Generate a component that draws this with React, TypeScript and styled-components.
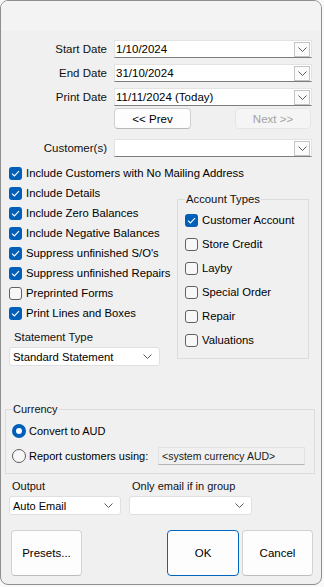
import React from "react";
import styled, { createGlobalStyle, css } from "styled-components";

const GlobalStyle = createGlobalStyle`
  html, body {
    margin: 0;
    padding: 0;
    background: #f9f9f9;
  }
  body {
    font-family: "Liberation Sans", Arial, sans-serif;
    font-size: 11px;
    color: #000;
  }
  * {
    box-sizing: border-box;
  }
`;

const Window = styled.div`
  width: 322px;
  height: 585px;
  border: 1px solid #8f8f8f;
  border-radius: 8px;
  background: #f0f0f0;
  overflow: hidden;
  display: flex;
  flex-direction: column;
`;

const TitleBar = styled.div`
  height: 30px;
  flex: none;
  background: #f3f3f3;
`;

const DateGrid = styled.div`
  display: grid;
  grid-template-columns: 106px 198px;
  column-gap: 7px;
  row-gap: 6px;
  margin-top: 9px;
  align-items: center;
`;

const FieldLabel = styled.div`
  text-align: right;
  color: #111;
  line-height: 18px;
  font-size: 11.5px;
`;

const Field = styled.div`
  height: 18px;
  background: #fff;
  border: 1px solid #e3e3e3;
  border-bottom: 1px solid #7c7c7c;
  display: flex;
  align-items: center;
  padding-left: 1px;
  line-height: 16px;
  white-space: nowrap;
  font-size: 11.5px;
`;

const FieldText = styled.span`
  flex: 1;
`;

const DropButton = styled.span`
  width: 16px;
  height: 15px;
  margin-right: 1px;
  border: 1px solid #c4c4c4;
  background: #fbfbfb;
  display: flex;
  align-items: center;
  justify-content: center;
`;

const NavRow = styled.div`
  grid-column: 2;
  display: flex;
  justify-content: space-between;
  margin-top: -4px;
  padding-right: 1px;
`;

const NavButton = styled.div<{ $disabled?: boolean }>`
  width: 77px;
  height: 21px;
  border: 1px solid #d0d0d0;
  border-bottom-color: #b8b8b8;
  border-radius: 4px;
  background: #fdfdfd;
  display: flex;
  align-items: center;
  justify-content: center;
  font-size: 11.5px;
  ${({ $disabled }) =>
    $disabled &&
    css`
      width: 76px;
      background: #f5f5f5;
      border-color: #e5e5e5;
      color: #a3a3a3;
    `}
`;

const CustomerGrid = styled(DateGrid)`
  margin-top: 10px;
`;

const Checks = styled.div`
  display: flex;
  flex-direction: column;
  padding-left: 8px;
  margin-top: 6px;
  font-size: 11.3px;
`;

const CheckRow = styled.div<{ $tall?: boolean }>`
  display: flex;
  align-items: center;
  height: ${({ $tall }) => ($tall ? "24px" : "20px")};
  gap: 4px;
  white-space: nowrap;
`;

const Box = styled.span<{ $checked?: boolean }>`
  width: 13px;
  height: 13px;
  flex: none;
  border-radius: 3px;
  display: flex;
  align-items: center;
  justify-content: center;
  ${({ $checked }) =>
    $checked
      ? css`
          background: #005fb8;
        `
      : css`
          background: #f7f7f7;
          border: 1px solid #616161;
        `}
`;

const MidRow = styled.div`
  display: flex;
  gap: 8px;
`;

const LeftCol = styled.div`
  width: 160px;
  display: flex;
  flex-direction: column;
`;

const SmallLabel = styled.div`
  line-height: 14px;
  padding-left: 3px;
  color: #111;
`;

const StatementLabel = styled(SmallLabel)`
  margin-top: 7px;
  padding-left: 5px;
`;

const Select = styled.div<{ $width: number }>`
  width: ${({ $width }) => $width}px;
  height: 19px;
  margin-top: 3px;
  background: #fff;
  border: 1px solid #e0e0e0;
  border-radius: 3px;
  display: flex;
  align-items: center;
  justify-content: space-between;
  padding: 0 7px 0 3px;
  white-space: nowrap;
`;

const GroupBox = styled.fieldset`
  margin: 0;
  border: 1px solid #dcdcdc;
  padding: 2px 0 6px 7px;
  min-width: 0;
`;

const Legend = styled.legend`
  padding: 0 1px;
  line-height: 14px;
  color: #111;
`;

const AccountBox = styled(GroupBox)`
  width: 132px;
  margin-top: 9px;
  align-self: flex-start;
`;

const CurrencyBox = styled(GroupBox)`
  width: 310px;
  margin: 36px 0 0 4px;
  padding: 5px 9px 6px 6px;
`;

const RadioRow = styled.div<{ $tall?: boolean }>`
  display: flex;
  align-items: center;
  gap: 3px;
  height: ${({ $tall }) => ($tall ? "22px" : "20px")};
  margin-bottom: 4px;
  white-space: nowrap;
  &:last-child {
    margin-bottom: 0;
  }
`;

const RadioDot = styled.span<{ $checked?: boolean }>`
  width: 14px;
  height: 14px;
  flex: none;
  border-radius: 50%;
  display: flex;
  align-items: center;
  justify-content: center;
  ${({ $checked }) =>
    $checked
      ? css`
          background: #005fb8;
          &::after {
            content: "";
            width: 6px;
            height: 6px;
            border-radius: 50%;
            background: #fff;
          }
        `
      : css`
          background: #f7f7f7;
          border: 1px solid #5c5c5c;
        `}
`;

const DisabledBox = styled.div`
  margin-left: auto;
  width: 147px;
  flex: none;
  height: 18px;
  border: 1px solid #e2e2e2;
  border-bottom-color: #b5b5b5;
  background: #f0f0f0;
  font-size: 10.5px;
  display: flex;
  align-items: center;
  padding-left: 3px;
  color: #1a1a1a;
`;

const OutputRow = styled.div`
  display: flex;
  gap: 8px;
  padding-left: 8px;
  margin-top: 5px;
`;

const OutputCol = styled.div`
  display: flex;
  flex-direction: column;
`;

const ButtonRow = styled.div`
  display: flex;
  padding: 0 8px 0 10px;
  margin-top: 15px;
  gap: 3px;
`;

const DialogButton = styled.div<{ $default?: boolean; $push?: boolean; $width?: number }>`
  width: ${({ $width }) => $width ?? 71}px;
  height: 46px;
  border: 1px solid #d3d3d3;
  border-bottom-color: #bdbdbd;
  border-radius: 4px;
  background: #fdfdfd;
  display: flex;
  align-items: center;
  justify-content: center;
  font-size: 11.5px;
  ${({ $push }) =>
    $push &&
    css`
      margin-left: auto;
    `}
  ${({ $default }) =>
    $default &&
    css`
      border: 1px solid #0067c0;
    `}
`;

const Chevron = () => (
  <svg width="9" height="5" viewBox="0 0 9 5">
    <path d="M0.5 0.5 L4.5 4.5 L8.5 0.5" fill="none" stroke="#5a5a5a" strokeWidth="1" />
  </svg>
);

const Tick = () => (
  <svg width="9" height="7" viewBox="0 0 9 7">
    <path d="M1 3.6 L3.4 6 L8 1.2" fill="none" stroke="#fff" strokeWidth="1.1" />
  </svg>
);

const Check = ({ label, checked, tall }: { label: string; checked?: boolean; tall?: boolean }) => (
  <CheckRow $tall={tall}>
    <Box $checked={checked}>{checked && <Tick />}</Box>
    <span>{label}</span>
  </CheckRow>
);

const DateField = ({ value }: { value: string }) => (
  <Field>
    <FieldText>{value}</FieldText>
    <DropButton>
      <Chevron />
    </DropButton>
  </Field>
);

const leftChecks = [
  { label: "Include Details", checked: true },
  { label: "Include Zero Balances", checked: true },
  { label: "Include Negative Balances", checked: true },
  { label: "Suppress unfinished S/O's", checked: true },
  { label: "Suppress unfinished Repairs", checked: true },
  { label: "Preprinted Forms", checked: false },
  { label: "Print Lines and Boxes", checked: true },
];

const accountTypes = [
  { label: "Customer Account", checked: true },
  { label: "Store Credit" },
  { label: "Layby" },
  { label: "Special Order" },
  { label: "Repair" },
  { label: "Valuations" },
];

export default function App() {
  return (
    <>
      <GlobalStyle />
      <Window>
        <TitleBar />

        <DateGrid>
          <FieldLabel>Start Date</FieldLabel>
          <DateField value="1/10/2024" />
          <FieldLabel>End Date</FieldLabel>
          <DateField value="31/10/2024" />
          <FieldLabel>Print Date</FieldLabel>
          <DateField value="11/11/2024 (Today)" />
          <NavRow>
            <NavButton>&lt;&lt; Prev</NavButton>
            <NavButton $disabled>Next &gt;&gt;</NavButton>
          </NavRow>
        </DateGrid>

        <CustomerGrid>
          <FieldLabel>Customer(s)</FieldLabel>
          <DateField value="" />
        </CustomerGrid>

        <Checks>
          <Check label="Include Customers with No Mailing Address" checked />
          <MidRow>
            <LeftCol>
              {leftChecks.map((c) => (
                <Check key={c.label} label={c.label} checked={c.checked} />
              ))}
              <StatementLabel>Statement Type</StatementLabel>
              <Select $width={151}>
                <span>Standard Statement</span>
                <Chevron />
              </Select>
            </LeftCol>
            <AccountBox>
              <Legend>Account Types</Legend>
              {accountTypes.map((c) => (
                <Check key={c.label} label={c.label} checked={c.checked} tall />
              ))}
            </AccountBox>
          </MidRow>
        </Checks>

        <CurrencyBox>
          <Legend>Currency</Legend>
          <RadioRow>
            <RadioDot $checked />
            <span>Convert to AUD</span>
          </RadioRow>
          <RadioRow $tall>
            <RadioDot />
            <span>Report customers using:</span>
            <DisabledBox>&lt;system currency AUD&gt;</DisabledBox>
          </RadioRow>
        </CurrencyBox>

        <OutputRow>
          <OutputCol>
            <SmallLabel>Output</SmallLabel>
            <Select $width={112}>
              <span>Auto Email</span>
              <Chevron />
            </Select>
          </OutputCol>
          <OutputCol>
            <SmallLabel>Only email if in group</SmallLabel>
            <Select $width={123}>
              <span />
              <Chevron />
            </Select>
          </OutputCol>
        </OutputRow>

        <ButtonRow>
          <DialogButton>Presets...</DialogButton>
          <DialogButton $default $push $width={72}>
            OK
          </DialogButton>
          <DialogButton>Cancel</DialogButton>
        </ButtonRow>
      </Window>
    </>
  );
}
